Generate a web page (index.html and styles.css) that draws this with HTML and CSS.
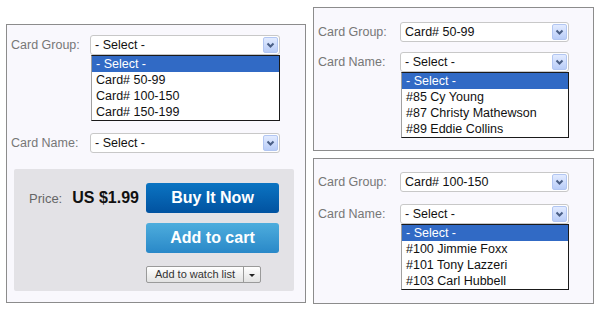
FILE: index.html
```html
<!DOCTYPE html>
<html lang="en">
<head>
    <meta charset="UTF-8">
    <title>Card Picker</title>
    <link rel="stylesheet" href="styles.css">
</head>
<body>

    <div class="page">

        <!-- Main panel: group list open, price box below -->
        <div class="panel panel-main">
            <div class="field">
                <span class="field-label">Card Group:</span>
                <div class="combo">
                    <div class="select">
                        <span class="select-text">- Select -</span>
                        <span class="select-arrow"><svg width="13" height="14" viewBox="0 0 13 14"><polyline points="3.5,5.5 6.5,8.5 9.5,5.5" fill="none" stroke="#4a5f86" stroke-width="2"/></svg></span>
                    </div>
                    <ul class="options">
                        <li class="active">- Select -</li>
                        <li>Card# 50-99</li>
                        <li>Card# 100-150</li>
                        <li>Card# 150-199</li>
                    </ul>
                </div>
            </div>

            <div class="field field-spaced">
                <span class="field-label">Card Name:</span>
                <div class="combo">
                    <div class="select">
                        <span class="select-text">- Select -</span>
                        <span class="select-arrow"><svg width="13" height="14" viewBox="0 0 13 14"><polyline points="3.5,5.5 6.5,8.5 9.5,5.5" fill="none" stroke="#4a5f86" stroke-width="2"/></svg></span>
                    </div>
                </div>
            </div>

            <!-- Price and buy buttons -->
            <div class="buy-box">
                <div class="price">
                    <span class="price-label">Price:</span>
                    <span class="price-value">US $1.99</span>
                </div>
                <div class="buy-actions">
                    <button class="btn btn-buy">Buy It Now</button>
                    <button class="btn btn-cart">Add to cart</button>
                    <div class="watch">
                        <span class="watch-main">Add to watch list</span>
                        <span class="watch-more"><span class="caret"></span></span>
                    </div>
                </div>
            </div>
        </div>

        <div class="side">
            <!-- Group 50-99 chosen, name list open -->
            <div class="panel panel-top">
                <div class="field">
                    <span class="field-label">Card Group:</span>
                    <div class="combo">
                        <div class="select">
                            <span class="select-text">Card# 50-99</span>
                            <span class="select-arrow"><svg width="13" height="14" viewBox="0 0 13 14"><polyline points="3.5,5.5 6.5,8.5 9.5,5.5" fill="none" stroke="#4a5f86" stroke-width="2"/></svg></span>
                        </div>
                    </div>
                </div>
                <div class="field">
                    <span class="field-label">Card Name:</span>
                    <div class="combo">
                        <div class="select">
                            <span class="select-text">- Select -</span>
                            <span class="select-arrow"><svg width="13" height="14" viewBox="0 0 13 14"><polyline points="3.5,5.5 6.5,8.5 9.5,5.5" fill="none" stroke="#4a5f86" stroke-width="2"/></svg></span>
                        </div>
                        <ul class="options">
                            <li class="active">- Select -</li>
                            <li>#85 Cy Young</li>
                            <li>#87 Christy Mathewson</li>
                            <li>#89 Eddie Collins</li>
                        </ul>
                    </div>
                </div>
            </div>

            <!-- Group 100-150 chosen, name list open -->
            <div class="panel panel-bottom">
                <div class="field">
                    <span class="field-label">Card Group:</span>
                    <div class="combo">
                        <div class="select">
                            <span class="select-text">Card# 100-150</span>
                            <span class="select-arrow"><svg width="13" height="14" viewBox="0 0 13 14"><polyline points="3.5,5.5 6.5,8.5 9.5,5.5" fill="none" stroke="#4a5f86" stroke-width="2"/></svg></span>
                        </div>
                    </div>
                </div>
                <div class="field">
                    <span class="field-label">Card Name:</span>
                    <div class="combo">
                        <div class="select">
                            <span class="select-text">- Select -</span>
                            <span class="select-arrow"><svg width="13" height="14" viewBox="0 0 13 14"><polyline points="3.5,5.5 6.5,8.5 9.5,5.5" fill="none" stroke="#4a5f86" stroke-width="2"/></svg></span>
                        </div>
                        <ul class="options">
                            <li class="active">- Select -</li>
                            <li>#100 Jimmie Foxx</li>
                            <li>#101 Tony Lazzeri</li>
                            <li>#103 Carl Hubbell</li>
                        </ul>
                    </div>
                </div>
            </div>
        </div>

    </div>

</body>
</html>
```

FILE: styles.css
```css
/* Page */
body {
    margin: 0;
    background-color: #ffffff;
    font-family: "Liberation Sans", Arial, sans-serif;
    font-size: 12.5px;
    color: #111;
}

.page {
    display: flex;
    align-items: flex-start;
    gap: 7px;
    padding: 7px 0 0 6px;
}

.side {
    display: flex;
    flex-direction: column;
    gap: 7px;
    width: 281px;
}

/* Panels */
.panel {
    box-sizing: border-box;
    border: 1px solid #8c8c8c;
    background-color: #f9f8fd;
    padding-left: 4px;
}

.panel-main {
    width: 300px;
    margin-top: 17px;
    padding-top: 10px;
    padding-bottom: 11px;
}

.panel-main .field-spaced {
    margin-top: 12px;
}

.panel-top {
    padding-top: 14px;
    padding-bottom: 12px;
}

.panel-top .field + .field {
    margin-top: 10px;
}

.panel-bottom {
    padding-top: 13px;
    padding-bottom: 13px;
}

.panel-bottom .field + .field {
    margin-top: 12px;
}

.panel-top .field-label,
.panel-bottom .field-label {
    width: 82px;
}

.panel-top .combo,
.panel-bottom .combo {
    width: 169px;
}

/* Label + dropdown rows */
.field {
    display: flex;
    align-items: flex-start;
}

.field-label {
    width: 79px;
    line-height: 20px;
    color: #777;
}

.combo {
    width: 190px;
}

.select {
    box-sizing: border-box;
    height: 20px;
    display: flex;
    align-items: center;
    background-color: #fff;
    border: 1px solid #c8c8c8;
    border-radius: 3px;
}

.select-text {
    flex: 1;
    padding-left: 4px;
}

.select-arrow {
    box-sizing: border-box;
    width: 15px;
    height: 16px;
    margin-right: 1px;
    margin-top: -1px;
    display: flex;
    align-items: center;
    justify-content: center;
    background: linear-gradient(#e2ebff, #b9cdf8);
    border: 1px solid #b2c6f2;
    border-radius: 2px;
}

.options {
    box-sizing: border-box;
    list-style: none;
    margin: 0 0 0 1px;
    padding: 0;
    background-color: #fff;
    border: 1px solid #1a1a1a;
    border-left-color: #a0a0a0;
}

.options li {
    height: 16px;
    line-height: 16px;
    padding-left: 4px;
}

.options li.active {
    background-color: #316ac5;
    color: #fff;
}

/* Grey buy box */
.buy-box {
    display: flex;
    width: 280px;
    box-sizing: border-box;
    margin: 16px 0 0 3px;
    padding: 14px 15px 8px 15px;
    background-color: #e3e2e6;
    border-radius: 2px;
}

.price {
    display: flex;
    align-items: center;
    height: 30px;
    gap: 10px;
}

.price-label {
    font-size: 13px;
    color: #666;
}

.price-value {
    font-size: 16px;
    font-weight: bold;
    color: #111;
}

.buy-actions {
    margin-left: auto;
    width: 133px;
    display: flex;
    flex-direction: column;
    align-items: flex-start;
}

.btn {
    width: 133px;
    height: 30px;
    border: none;
    border-radius: 3px;
    color: #fff;
    font-family: "Liberation Sans", Arial, sans-serif;
    font-size: 16px;
    font-weight: bold;
    padding: 0;
    cursor: pointer;
}

.btn-buy {
    background: linear-gradient(#0b74c2, #0152a0);
}

.btn-cart {
    margin-top: 10px;
    background: linear-gradient(#4eaddd, #2988c8);
}

.watch {
    margin-top: 13px;
    display: flex;
    height: 17px;
    box-sizing: border-box;
    border: 1px solid #9a9a9a;
    border-radius: 2px;
    background: linear-gradient(#ffffff, #e2e2e2);
    font-size: 11px;
    color: #333;
}

.watch-main {
    width: 96px;
    line-height: 15px;
    text-align: center;
    border-right: 1px solid #9a9a9a;
}

.watch-more {
    width: 16px;
    display: flex;
    align-items: center;
    justify-content: center;
}

.caret {
    width: 0;
    height: 0;
    border-left: 3px solid transparent;
    border-right: 3px solid transparent;
    border-top: 3px solid #222;
    margin-top: 2px;
}
```
